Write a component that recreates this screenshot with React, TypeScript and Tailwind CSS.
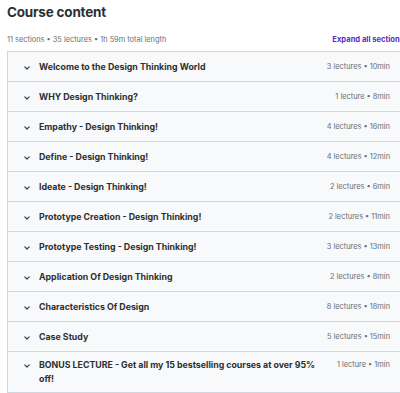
const sections = [
  { id: 1, title: "Welcome to the Design Thinking World", meta: "3 lectures • 10min" },
  { id: 2, title: "WHY Design Thinking?", meta: "1 lecture • 8min" },
  { id: 3, title: "Empathy - Design Thinking!", meta: "4 lectures • 16min" },
  { id: 4, title: "Define - Design Thinking!", meta: "4 lectures • 12min" },
  { id: 5, title: "Ideate - Design Thinking!", meta: "2 lectures • 6min" },
  { id: 6, title: "Prototype Creation - Design Thinking!", meta: "2 lectures • 11min" },
  { id: 7, title: "Prototype Testing - Design Thinking!", meta: "3 lectures • 13min" },
  { id: 8, title: "Application Of Design Thinking", meta: "2 lectures • 8min" },
  { id: 9, title: "Characteristics Of Design", meta: "8 lectures • 18min" },
  { id: 10, title: "Case Study", meta: "5 lectures • 15min" },
  {
    id: 11,
    title: "BONUS LECTURE - Get all my 15 bestselling courses at over 95% off!",
    meta: "1 lecture • 1min",
  },
];

const Chevron = () => (
  <svg width="6" height="4" viewBox="0 0 6 4" className="shrink-0 mt-[6px]">
    <path d="M0.8 0.8 L3 3 L5.2 0.8" fill="none" stroke="#3e4143" strokeWidth="1.2" strokeLinecap="round" strokeLinejoin="round" />
  </svg>
);

const App = () => {
  return (
    <div className="w-[400px] h-[393px] overflow-hidden bg-white font-['Inter',sans-serif] text-[#2d2f31]">
      <div className="w-[410px] pl-[7px]">
        <h2 className="pt-[3px] text-[13.5px] leading-[18px] font-bold tracking-[-0.2px]">Course content</h2>
        <div className="mt-[13px] flex items-center justify-between pr-[6px]">
          <p className="text-[7.4px] text-[#6a6f73]">11 sections • 35 lectures • 1h 59m total length</p>
          <span className="text-[7.6px] font-bold text-[#5a2bc4] whitespace-nowrap">Expand all sections</span>
        </div>
        <div className="mt-[6px] border border-[#d1d7dc]">
          {sections.map((item) => (
            <div
              key={item.id}
              className="flex items-start justify-between min-h-[30px] py-[7.5px] pl-[16px] pr-[19px] bg-[#f7f9fa] border-b border-[#d1d7dc] last:border-b-0 last:py-[6px]"
            >
              <div className="flex items-start gap-[9px]">
                <Chevron />
                <h3 className="max-w-[285px] text-[8.8px] leading-[14px] font-bold">{item.title}</h3>
              </div>
              <span className="shrink-0 ml-4 text-[7.4px] leading-[14px] text-[#6a6f73]">{item.meta}</span>
            </div>
          ))}
        </div>
      </div>
    </div>
  );
};

export default App;
